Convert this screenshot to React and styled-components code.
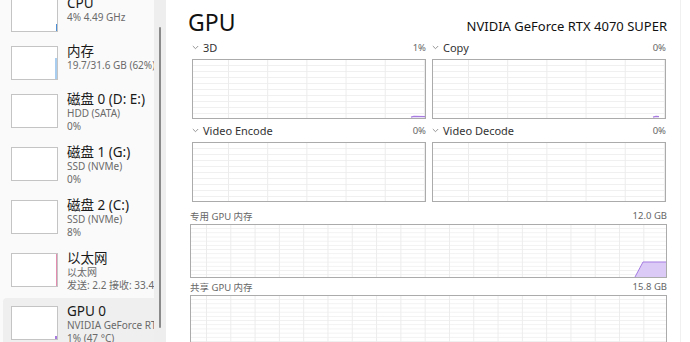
import React from "react";
import styled, { createGlobalStyle } from "styled-components";

const GlobalStyle = createGlobalStyle`
  html, body {
    margin: 0;
    padding: 0;
    background: #ffffff;
    overflow: hidden;
  }
  body {
    font-family: "Segoe UI", "Noto Sans", "Noto Sans CJK SC", sans-serif;
    color: #1a1a1a;
  }
`;

const FONT = `"Segoe UI", "Noto Sans", "Noto Sans CJK SC", sans-serif`;

const sideItems = [
  { title: "CPU", lines: ["4% 4.49 GHz"], spark: { color: "#4d8fd6", top: 78, width: 1.5 } },
  { title: "内存", lines: ["19.7/31.6 GB (62%)"], spark: { color: "#a9cdee", top: 35, width: 2 } },
  { title: "磁盘 0 (D: E:)", lines: ["HDD (SATA)", "0%"] },
  { title: "磁盘 1 (G:)", lines: ["SSD (NVMe)", "0%"] },
  { title: "磁盘 2 (C:)", lines: ["SSD (NVMe)", "8%"] },
  { title: "以太网", lines: ["以太网", "发送: 2.2 接收: 33.4"], spark: { color: "#e48bb0", top: 0, width: 1.5 } },
  { title: "GPU 0", lines: ["NVIDIA GeForce RTX 4070 SUPER", "1% (47 °C)"], selected: true, spark: { color: "#a77be0", top: 92, width: 2 } },
];

const engines = [
  { name: "3D", value: "1%", blip: [218, 234] },
  { name: "Copy", value: "0%", blip: [220, 226] },
  { name: "Video Encode", value: "0%" },
  { name: "Video Decode", value: "0%" },
];

const Window = styled.div`
  display: flex;
  width: 690px;
  height: 342px;
  overflow: hidden;
  background: #ffffff;
`;

const Sidebar = styled.div`
  width: 154px;
  flex-shrink: 0;
  background: #fafafa;
  overflow: hidden;
`;

const SideList = styled.div`
  display: flex;
  flex-direction: column;
  margin-top: -10px;
`;

const SideItem = styled.div`
  display: flex;
  align-items: flex-start;
  gap: 9px;
  margin-left: 3px;
  padding: 6px 0 6px 8px;
  background: ${({ selected }) => (selected ? "#efefef" : "transparent")};
  border-radius: ${({ selected }) => (selected ? "4px 0 0 4px" : "0")};
  white-space: nowrap;
`;

const Thumb = styled.div`
  position: relative;
  width: 47px;
  height: 34px;
  margin-top: 2px;
  flex-shrink: 0;
  box-sizing: border-box;
  border: 1px solid #c4c4c4;
  background: #ffffff;
  overflow: hidden;
`;

const Spark = styled.div`
  position: absolute;
  right: 0;
  bottom: 0;
  background: ${({ color }) => color};
`;

const SideText = styled.div`
  display: flex;
  flex-direction: column;
  min-width: 0;
`;

const SideTitle = styled.div`
  font-family: ${FONT};
  font-size: 13.5px;
  line-height: 15px;
  color: #1a1a1a;
`;

const SideSub = styled.div`
  font-family: ${FONT};
  font-size: 10px;
  line-height: 13px;
  color: #6a6a6a;
`;

const Track = styled.div`
  width: 12px;
  flex-shrink: 0;
  background: #eeeeee;
  display: flex;
  justify-content: center;
  padding-top: 27px;
  box-sizing: border-box;
`;

const TrackThumb = styled.div`
  width: 2px;
  height: 301px;
  background: #8a8a8a;
  border-radius: 1px;
`;

const Main = styled.div`
  flex: 1;
  padding: 8px 0 0 24px;
  box-sizing: border-box;
  display: flex;
  flex-direction: column;
  border-right: 1px solid #f0f0f0;
  margin-right: 9px;
  min-width: 0;
`;

const Content = styled.div`
  width: 477px;
  display: flex;
  flex-direction: column;
`;

const Header = styled.div`
  display: flex;
  justify-content: space-between;
  align-items: baseline;
  height: 28px;
`;

const Title = styled.div`
  font-family: ${FONT};
  font-size: 23px;
  line-height: 28px;
  margin-left: -2px;
  color: #111;
`;

const Model = styled.div`
  font-family: ${FONT};
  font-size: 13px;
  color: #111;
`;

const EngineGrid = styled.div`
  display: grid;
  grid-template-columns: 1fr 1fr;
  column-gap: 6px;
  padding: 0 1px 0 2px;
`;

const Engine = styled.div`
  display: flex;
  flex-direction: column;
`;

const EngineHead = styled.div`
  display: flex;
  align-items: center;
  justify-content: space-between;
  height: 23px;
`;

const EngineName = styled.div`
  display: flex;
  align-items: center;
  gap: 4px;
  font-family: ${FONT};
  font-size: 11px;
  color: #333;
`;

const Value = styled.div`
  font-family: ${FONT};
  font-size: 9.5px;
  color: #666;
`;

const Chart = styled.div`
  position: relative;
  box-sizing: border-box;
  height: ${({ h }) => h}px;
  border: 1px solid #ababab;
  background-color: #ffffff;
  background-image: linear-gradient(to right, #ececec 1px, transparent 1px),
    linear-gradient(to bottom, #f0f0f0 1px, transparent 1px);
  background-size: ${({ cx }) => cx}px 100%, 100% ${({ cy }) => cy}px;
  background-position: ${({ ox }) => ox}px 0, 0 ${({ cy }) => cy - 1}px;
  overflow: hidden;
`;

const Plot = styled.svg`
  display: block;
  width: 100%;
  height: 100%;
`;

const MemSection = styled.div`
  display: flex;
  flex-direction: column;
  margin-top: ${({ gapTop }) => gapTop}px;
`;

const MemHead = styled.div`
  display: flex;
  align-items: center;
  justify-content: space-between;
  height: 17px;
  font-family: ${FONT};
  font-size: 9.5px;
  color: #666;
`;

const Chevron = () => (
  <svg width="7" height="5" viewBox="0 0 7 5">
    <path d="M0.8 1 L3.5 3.7 L6.2 1" fill="none" stroke="#8a8a8a" strokeWidth="0.9" />
  </svg>
);

const SideEntry = ({ item }) => (
  <SideItem selected={item.selected}>
    <Thumb>
      {item.spark && (
        <Spark
          color={item.spark.color}
          style={{ top: `${item.spark.top}%`, width: `${item.spark.width}px` }}
        />
      )}
    </Thumb>
    <SideText>
      <SideTitle>{item.title}</SideTitle>
      {item.lines.map((l, i) => (
        <SideSub key={i}>{l}</SideSub>
      ))}
    </SideText>
  </SideItem>
);

export default function App() {
  return (
    <>
      <GlobalStyle />
      <Window>
        <Sidebar>
          <SideList>
            {sideItems.map((it) => (
              <SideEntry key={it.title} item={it} />
            ))}
          </SideList>
        </Sidebar>
        <Track>
          <TrackThumb />
        </Track>
        <Main>
          <Content>
            <Header>
              <Title>GPU</Title>
              <Model>NVIDIA GeForce RTX 4070 SUPER</Model>
            </Header>
            <EngineGrid>
              {engines.map((e) => (
                <Engine key={e.name}>
                  <EngineHead>
                    <EngineName>
                      <Chevron />
                      {e.name}
                    </EngineName>
                    <Value>{e.value}</Value>
                  </EngineHead>
                  <Chart h={60} cx={39.2} cy={6} ox={35}>
                    {e.blip && (
                      <Plot viewBox="0 0 232 58" preserveAspectRatio="none">
                        <path
                          d={`M${e.blip[0]} 57.2 L${e.blip[0] + 3} 56.4 L${e.blip[1]} 56.6`}
                          fill="none"
                          stroke="#a77be0"
                          strokeWidth="1.2"
                        />
                      </Plot>
                    )}
                  </Chart>
                </Engine>
              ))}
            </EngineGrid>
            <MemSection gapTop={5}>
              <MemHead>
                <span>专用 GPU 内存</span>
                <span>12.0 GB</span>
              </MemHead>
              <Chart h={54} cx={24.3} cy={4.2} ox={15}>
                <Plot viewBox="0 0 475 52" preserveAspectRatio="none">
                  <path d="M444 52 L452 37 L475 37 L475 52 Z" fill="#dccaf6" />
                  <path d="M444 52 L452 37 L475 37" fill="none" stroke="#a47ce2" strokeWidth="1" />
                </Plot>
              </Chart>
            </MemSection>
            <MemSection gapTop={0}>
              <MemHead>
                <span>共享 GPU 内存</span>
                <span>15.8 GB</span>
              </MemHead>
              <Chart h={60} cx={24.3} cy={4.2} ox={15} />
            </MemSection>
          </Content>
        </Main>
      </Window>
    </>
  );
}
